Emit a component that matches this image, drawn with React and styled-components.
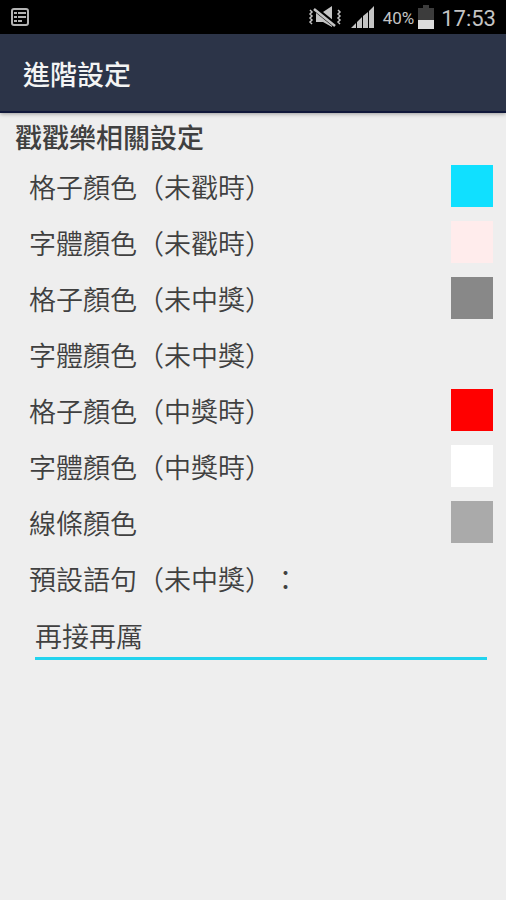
import styled, { createGlobalStyle } from "styled-components";

const GlobalStyle = createGlobalStyle`
  body {
    margin: 0;
    background: #eeeeee;
    color: #404040;
    font-family: Roboto, "Noto Sans CJK TC", sans-serif;
    text-spacing-trim: space-all;
  }
`;

const StatusBar = styled.div`
  display: flex;
  align-items: center;
  justify-content: space-between;
  height: 34px;
  padding: 0 10px;
  background: #000;
  color: #c4c4c4;
`;

const StatusGroup = styled.div`
  display: flex;
  align-items: center;
`;

const Signal = styled.svg`
  margin-left: 9px;
`;

const Battery = styled.span`
  margin: 2px 4px 0 8px;
  font-size: 17px;
`;

const Clock = styled.span`
  margin: 2px 0 0 7px;
  font-size: 22px;
`;

const Header = styled.header`
  display: flex;
  align-items: center;
  box-sizing: border-box;
  height: 79px;
  padding: 6px 23px 0;
  background: #2c3448;
  border-bottom: 2px solid #10183a;
  box-shadow: 0 1px 4px rgba(0, 0, 0, 0.35);
`;

const Title = styled.h1`
  margin: 0;
  color: #f4f4f4;
  font-size: 27px;
  font-weight: 500;
  line-height: 40px;
`;

const Content = styled.main`
  padding: 7px 13px 7px 15px;
`;

const SectionTitle = styled.h2`
  margin: 0;
  font-size: 27px;
  font-weight: 500;
  line-height: 38px;
`;

const Row = styled.div`
  display: flex;
  align-items: center;
  justify-content: space-between;
  height: 56px;
  padding-left: 14px;
`;

const Label = styled.label`
  padding-top: 2px;
  font-family: "Noto Sans CJK TC", sans-serif;
  font-size: 27px;
  font-weight: 350;
  line-height: 40px;
`;

const Swatch = styled.input`
  appearance: none;
  width: 42px;
  height: 42px;
  padding: 0;
  border: none;
  background: none;
  cursor: pointer;

  &::-webkit-color-swatch-wrapper {
    padding: 0;
  }

  &::-webkit-color-swatch {
    border: none;
    border-radius: 0;
  }
`;

const Phrase = styled.input`
  display: block;
  box-sizing: border-box;
  width: calc(100% - 26px);
  height: 54px;
  margin: 0 6px 0 20px;
  padding: 8px 0 0;
  border: none;
  border-bottom: 3px solid #22d3ee;
  background: none;
  color: inherit;
  font-family: "Noto Sans CJK TC", sans-serif;
  font-size: 27px;
  font-weight: 350;
  outline: none;
`;

const colors = [
  { id: "cell", label: "格子顏色（未戳時）", value: "#10e0ff" },
  { id: "text", label: "字體顏色（未戳時）", value: "#ffecec" },
  { id: "cell-lose", label: "格子顏色（未中獎）", value: "#888888" },
  { id: "text-lose", label: "字體顏色（未中獎）", value: "#eeeeee" },
  { id: "cell-win", label: "格子顏色（中獎時）", value: "#ff0000" },
  { id: "text-win", label: "字體顏色（中獎時）", value: "#ffffff" },
  { id: "line", label: "線條顏色", value: "#aaaaaa" },
];

const NoticeIcon = () => (
  <svg width="20" height="20" viewBox="0 0 20 20" fill="none" stroke="#b4b4b4">
    <rect x="2" y="2" width="16" height="16" rx="2" strokeWidth="2" />
    <path d="M4 6h3M8 6h8M4 10h3M8 10h8M4 14h3M8 14h4" strokeWidth="2" />
  </svg>
);

const MuteIcon = () => (
  <svg width="34" height="22" viewBox="0 0 34 22" fill="none" stroke="#c4c4c4">
    <path d="M8 6h7l9-6v21l-9-5H8z" fill="#c4c4c4" stroke="none" />
    <path d="M6 2l21 17" stroke="#000" strokeWidth="5" />
    <path d="M6 3l21 17" strokeWidth="2.5" />
    <path d="M2 4l2 2-2 2 2 2-2 2 2 2-2 2 2 2M30 4l2 2-2 2 2 2-2 2 2 2-2 2 2 2" strokeWidth="1.5" />
  </svg>
);

const SignalIcon = () => (
  <Signal width="24" height="22" viewBox="0 0 24 22" fill="#c4c4c4">
    <path d="M0 22l5-5v5zM6 16l5-5v11H6zM12 10l5-4v16h-5zM18 5l5-5v22h-5z" />
  </Signal>
);

const BatteryIcon = () => (
  <svg width="16" height="24" viewBox="0 0 16 24">
    <path d="M5 0h6v3h5v21H0V3h5z" fill="#3c3c3c" />
    <path d="M0 15h16v9H0z" fill="#dcdcdc" />
  </svg>
);

const App = () => {
  return (
    <>
      <GlobalStyle />
      <StatusBar>
        <NoticeIcon />
        <StatusGroup>
          <MuteIcon />
          <SignalIcon />
          <Battery>40%</Battery>
          <BatteryIcon />
          <Clock>17:53</Clock>
        </StatusGroup>
      </StatusBar>
      <Header>
        <Title>進階設定</Title>
      </Header>
      <Content>
        <SectionTitle>戳戳樂相關設定</SectionTitle>
        {colors.map(({ id, label, value }) => (
          <Row key={id}>
            <Label htmlFor={id}>{label}</Label>
            <Swatch id={id} type="color" defaultValue={value} />
          </Row>
        ))}
        <Row>
          <Label htmlFor="phrase">預設語句（未中獎）：</Label>
        </Row>
        <Phrase id="phrase" type="text" defaultValue="再接再厲" />
      </Content>
    </>
  );
};

export default App;
